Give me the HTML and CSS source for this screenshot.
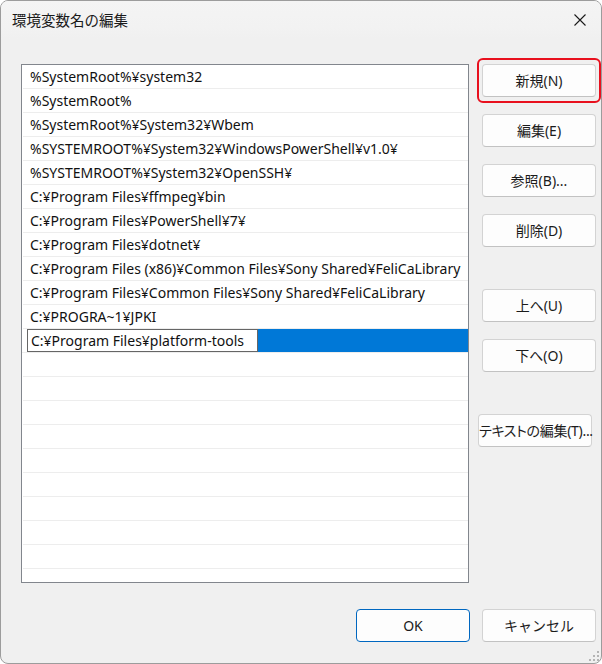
FILE: index.html
```html
<!DOCTYPE html>
<html lang="ja">
<head>
<meta charset="utf-8">
<title>環境変数名の編集</title>
<link rel="stylesheet" href="styles.css">
</head>
<body>
<div class="window">
  <div class="titlebar">
    <span class="title">環境変数名の編集</span>
    <svg class="close" width="12" height="12" viewBox="0 0 12 12"><path d="M0.5 0.5 L11.5 11.5 M11.5 0.5 L0.5 11.5" stroke="#1a1a1a" stroke-width="1.1" fill="none"/></svg>
  </div>
  <div class="content">
    <div class="list">
      <div class="row">%SystemRoot%¥system32</div>
      <div class="row">%SystemRoot%</div>
      <div class="row">%SystemRoot%¥System32¥Wbem</div>
      <div class="row">%SYSTEMROOT%¥System32¥WindowsPowerShell¥v1.0¥</div>
      <div class="row">%SYSTEMROOT%¥System32¥OpenSSH¥</div>
      <div class="row">C:¥Program Files¥ffmpeg¥bin</div>
      <div class="row">C:¥Program Files¥PowerShell¥7¥</div>
      <div class="row">C:¥Program Files¥dotnet¥</div>
      <div class="row">C:¥Program Files (x86)¥Common Files¥Sony Shared¥FeliCaLibrary</div>
      <div class="row">C:¥Program Files¥Common Files¥Sony Shared¥FeliCaLibrary</div>
      <div class="row">C:¥PROGRA~1¥JPKI</div>
      <div class="row row-edit"><span class="edit-gap"></span><span class="edit-box">C:¥Program Files¥platform-tools</span><span class="edit-sel"></span></div>
      <div class="row"></div>
      <div class="row"></div>
      <div class="row"></div>
      <div class="row"></div>
      <div class="row"></div>
      <div class="row"></div>
      <div class="row"></div>
      <div class="row"></div>
      <div class="row"></div>
      <div class="row"></div>
    </div>
    <div class="side">
      <button class="btn btn-focus">新規(N)</button>
      <button class="btn gap-s">編集(E)</button>
      <button class="btn gap-s">参照(B)...</button>
      <button class="btn gap-s">削除(D)</button>
      <button class="btn gap-l">上へ(U)</button>
      <button class="btn gap-s">下へ(O)</button>
      <button class="btn gap-l btn-text">テキストの編集(T)...</button>
    </div>
  </div>
  <div class="footer">
    <button class="btn btn-default">OK</button>
    <button class="btn">キャンセル</button>
  </div>
  <svg class="grip" width="12" height="12" viewBox="0 0 12 12">
    <rect x="9" y="1" width="2" height="2" fill="#b4b4b4"/>
    <rect x="5" y="5" width="2" height="2" fill="#b4b4b4"/>
    <rect x="9" y="5" width="2" height="2" fill="#b4b4b4"/>
    <rect x="1" y="9" width="2" height="2" fill="#b4b4b4"/>
    <rect x="5" y="9" width="2" height="2" fill="#b4b4b4"/>
    <rect x="9" y="9" width="2" height="2" fill="#b4b4b4"/>
  </svg>
</div>
</body>
</html>
```
FILE: styles.css
```css
* { box-sizing: border-box; }
html, body { margin: 0; padding: 0; background: #ffffff; }
body {
  font-family: "Noto Sans", "Noto Sans CJK JP", sans-serif;
  color: #1a1a1a;
}
.window {
  position: relative;
  width: 602px;
  height: 664px;
  border: 1px solid #9c9c9c;
  border-radius: 8px;
  background: #f0f0f0;
  overflow: hidden;
  display: flex;
  flex-direction: column;
}
.titlebar {
  height: 38px;
  flex: none;
  display: flex;
  align-items: center;
  justify-content: space-between;
  padding-left: 11px;
  background: linear-gradient(#f4f4f4, #f2f2f2 70%, #f0f0f0);
}
.title {
  font-family: "Noto Sans CJK JP", sans-serif;
  font-size: 14.5px;
  color: #1a1a1a;
  line-height: 20px;
}
.close { margin-right: 15px; display: block; }
.content {
  display: flex;
  padding: 25px 0 0 20px;
  gap: 13px;
}
.list {
  width: 448px;
  height: 519px;
  flex: none;
  background: #ffffff;
  border: 1px solid #82868d;
  overflow: hidden;
}
.row {
  height: 24px;
  border-bottom: 1px solid #ededed;
  margin-left: 1px;
  padding-left: 7px;
  font-size: 14px;
  line-height: 23px;
  color: #111;
  white-space: nowrap;
}
.row-edit {
  display: flex;
  padding-left: 0;
  margin-left: 0;
}
.edit-gap { width: 5px; flex: none; background: #fff; }
.edit-box {
  width: 231px;
  height: 23px;
  flex: none;
  border: 1px solid #666;
  background: #fff;
  padding-left: 3px;
  line-height: 21px;
}
.edit-sel { flex: 1; height: 23px; background: #0078d7; }
.side {
  display: flex;
  flex-direction: column;
  width: 114px;
}
.btn {
  position: relative;
  width: 114px;
  height: 33px;
  flex: none;
  padding: 0;
  border: 1px solid #d3d3d3;
  border-bottom-color: #c2c2c2;
  border-radius: 4px;
  background: #fdfdfd;
  font-family: "Noto Sans", "Noto Sans CJK JP", sans-serif;
  font-size: 14px;
  color: #1b1b1b;
  text-align: center;
  line-height: 30px;
  white-space: nowrap;
}
.gap-s { margin-top: 17px; }
.gap-l { margin-top: 42px; }
.btn-text {
  margin-left: -4px;
  font-feature-settings: "palt";
  letter-spacing: -0.3px;
}
.btn-focus::after {
  content: "";
  position: absolute;
  top: -7px;
  bottom: -7px;
  left: -6px;
  right: -6px;
  border: 2px solid #e8101e;
  border-radius: 6px;
}
.footer {
  display: flex;
  justify-content: flex-end;
  gap: 12px;
  padding-right: 5px;
  margin-top: 26px;
}
.btn-default { border-color: #0067c0; }
.grip { position: absolute; right: 1px; bottom: 1px; }
```
